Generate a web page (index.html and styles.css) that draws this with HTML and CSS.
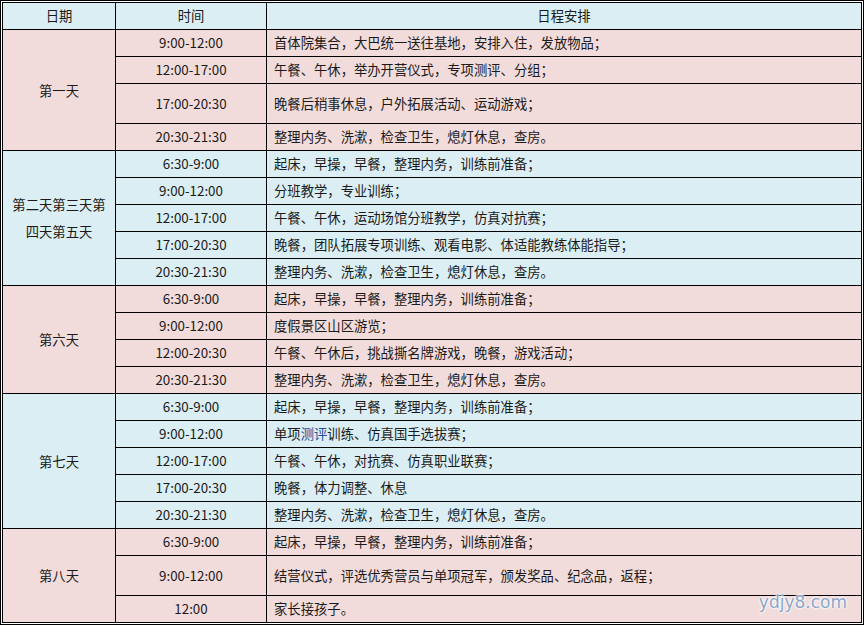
FILE: index.html
```html
<!DOCTYPE html>
<html lang="zh-CN">
<head>
<meta charset="utf-8">
<title>日程安排</title>
<link rel="stylesheet" href="styles.css">
</head>
<body>
<div class="frame">
  <div class="grid">
    <div class="cell hd center">日期</div>
    <div class="cell hd center">时间</div>
    <div class="cell hd center">日程安排</div>

    <div class="cell pk center day s4">第一天</div>
    <div class="cell pk center">9:00-12:00</div>
    <div class="cell pk">首体院集合，大巴统一送往基地，安排入住，发放物品；</div>
    <div class="cell pk center">12:00-17:00</div>
    <div class="cell pk">午餐、午休，举办开营仪式，专项测评、分组；</div>
    <div class="cell pk center tall">17:00-20:30</div>
    <div class="cell pk tall">晚餐后稍事休息，户外拓展活动、运动游戏；</div>
    <div class="cell pk center">20:30-21:30</div>
    <div class="cell pk">整理内务、洗漱，检查卫生，熄灯休息，查房。</div>

    <div class="cell bl center day s5">第二天第三天第四天第五天</div>
    <div class="cell bl center">6:30-9:00</div>
    <div class="cell bl">起床，早操，早餐，整理内务，训练前准备；</div>
    <div class="cell bl center">9:00-12:00</div>
    <div class="cell bl">分班教学，专业训练；</div>
    <div class="cell bl center">12:00-17:00</div>
    <div class="cell bl">午餐、午休，运动场馆分班教学，仿真对抗赛；</div>
    <div class="cell bl center">17:00-20:30</div>
    <div class="cell bl">晚餐，团队拓展专项训练、观看电影、体适能教练体能指导；</div>
    <div class="cell bl center">20:30-21:30</div>
    <div class="cell bl">整理内务、洗漱，检查卫生，熄灯休息，查房。</div>

    <div class="cell pk center day s4">第六天</div>
    <div class="cell pk center">6:30-9:00</div>
    <div class="cell pk">起床，早操，早餐，整理内务，训练前准备；</div>
    <div class="cell pk center">9:00-12:00</div>
    <div class="cell pk">度假景区山区游览；</div>
    <div class="cell pk center">12:00-20:30</div>
    <div class="cell pk">午餐、午休后，挑战撕名牌游戏，晚餐，游戏活动；</div>
    <div class="cell pk center">20:30-21:30</div>
    <div class="cell pk">整理内务、洗漱，检查卫生，熄灯休息，查房。</div>

    <div class="cell bl center day s5">第七天</div>
    <div class="cell bl center">6:30-9:00</div>
    <div class="cell bl">起床，早操，早餐，整理内务，训练前准备；</div>
    <div class="cell bl center">9:00-12:00</div>
    <div class="cell bl"><span>单项<a class="lnk" href="#">测评</a>训练、仿真国手选拔赛；</span></div>
    <div class="cell bl center">12:00-17:00</div>
    <div class="cell bl">午餐、午休，对抗赛、仿真职业联赛；</div>
    <div class="cell bl center">17:00-20:30</div>
    <div class="cell bl">晚餐，体力调整、休息</div>
    <div class="cell bl center">20:30-21:30</div>
    <div class="cell bl">整理内务、洗漱，检查卫生，熄灯休息，查房。</div>

    <div class="cell pk center day s3">第八天</div>
    <div class="cell pk center">6:30-9:00</div>
    <div class="cell pk">起床，早操，早餐，整理内务，训练前准备；</div>
    <div class="cell pk center tall">9:00-12:00</div>
    <div class="cell pk tall">结营仪式，评选优秀营员与单项冠军，颁发奖品、纪念品，返程；</div>
    <div class="cell pk center">12:00</div>
    <div class="cell pk">家长接孩子。</div>
  </div>
  <div class="mark">ydjy8.com</div>
</div>
</body>
</html>
```

FILE: styles.css
```css
html, body {
  margin: 0;
  padding: 0;
  background: #fff;
}

.frame {
  position: relative;
  width: 864px;
  height: 625px;
  box-sizing: border-box;
  border: 1px solid #000;
  padding: 1px;
  background: #fff;
}

.grid {
  display: grid;
  grid-template-columns: 112px 150px 594px;
  grid-auto-rows: minmax(26px, auto);
  gap: 1px;
  padding: 1px;
  background: #000;
  font-family: "Noto Sans CJK SC", "Liberation Sans", sans-serif;
  font-size: 10pt;
  color: #1a1a1a;
}

.cell {
  display: flex;
  align-items: center;
  padding: 0 7px;
  line-height: 26px;
  white-space: nowrap;
}

.center {
  justify-content: center;
  text-align: center;
}

.day {
  white-space: normal;
  line-height: 27px;
  padding: 0 6px;
}

.s3 { grid-row: span 3; }
.s4 { grid-row: span 4; }
.s5 { grid-row: span 5; }

.tall {
  height: 39px;
}

.hd { background: #daeef3; }
.pk { background: #f2dcdb; }
.bl { background: #daeef3; }

.lnk {
  color: #1f4e9c;
  text-decoration: none;
}

.mark {
  position: absolute;
  right: 16px;
  bottom: 12px;
  font-family: "DejaVu Sans", Verdana, sans-serif;
  font-size: 17px;
  line-height: 20px;
  color: #8ba6c9;
  text-shadow: 0 0 2px #fff, 0 0 2px #fff, 0 0 3px #fff;
}
```
